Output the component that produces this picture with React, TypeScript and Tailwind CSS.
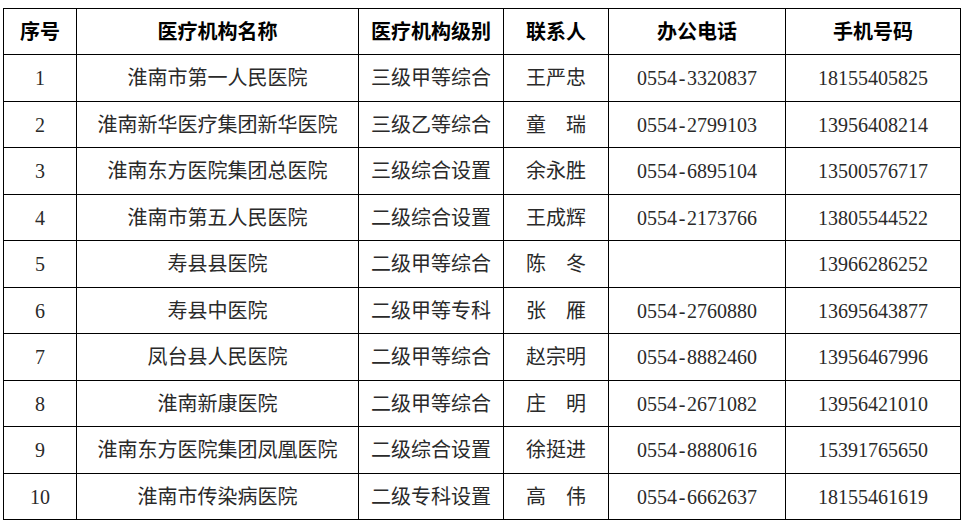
const HEADERS = ["序号", "医疗机构名称", "医疗机构级别", "联系人", "办公电话", "手机号码"];

const ROWS: Array<[string, string, string, string, string, string]> = [
  ["1", "淮南市第一人民医院", "三级甲等综合", "王严忠", "0554-3320837", "18155405825"],
  ["2", "淮南新华医疗集团新华医院", "三级乙等综合", "童　瑞", "0554-2799103", "13956408214"],
  ["3", "淮南东方医院集团总医院", "三级综合设置", "余永胜", "0554-6895104", "13500576717"],
  ["4", "淮南市第五人民医院", "二级综合设置", "王成辉", "0554-2173766", "13805544522"],
  ["5", "寿县县医院", "二级甲等综合", "陈　冬", "", "13966286252"],
  ["6", "寿县中医院", "二级甲等专科", "张　雁", "0554-2760880", "13695643877"],
  ["7", "凤台县人民医院", "二级甲等综合", "赵宗明", "0554-8882460", "13956467996"],
  ["8", "淮南新康医院", "二级甲等综合", "庄　明", "0554-2671082", "13956421010"],
  ["9", "淮南东方医院集团凤凰医院", "二级综合设置", "徐挺进", "0554-8880616", "15391765650"],
  ["10", "淮南市传染病医院", "二级专科设置", "高　伟", "0554-6662637", "18155461619"],
];

function Phone({ value }: { value: string }) {
  if (!value) return null;
  const [area, num] = value.split("-");
  return (
    <span>
      {area}
      <span className="inline-block w-[10px] text-center">-</span>
      {num}
    </span>
  );
}

export default function App() {
  return (
    <div className="h-[524px] w-[964px] bg-white pl-[3px] pt-[8px] font-['Liberation_Serif','Noto_Sans_CJK_SC',serif]">
      <div className="grid w-[958px] grid-cols-[73px_282px_145px_105px_177px_175px] grid-rows-[46px_47px_46px_47px_46px_47px_46px_47px_46px_47px_46px] border-l border-t border-black">
        {HEADERS.map((h) => (
          <div
            key={h}
            className="flex items-center justify-center border-b border-r border-black text-[20px] font-bold text-black"
          >
            {h}
          </div>
        ))}
        {ROWS.map((row) =>
          row.map((cell, i) => (
            <div
              key={`${row[0]}-${i}`}
              className="flex items-center justify-center whitespace-nowrap border-b border-r border-black text-[20px] leading-none text-[#2a2a2a]"
            >
              {i === 4 ? <Phone value={cell} /> : cell}
            </div>
          )),
        )}
      </div>
    </div>
  );
}
